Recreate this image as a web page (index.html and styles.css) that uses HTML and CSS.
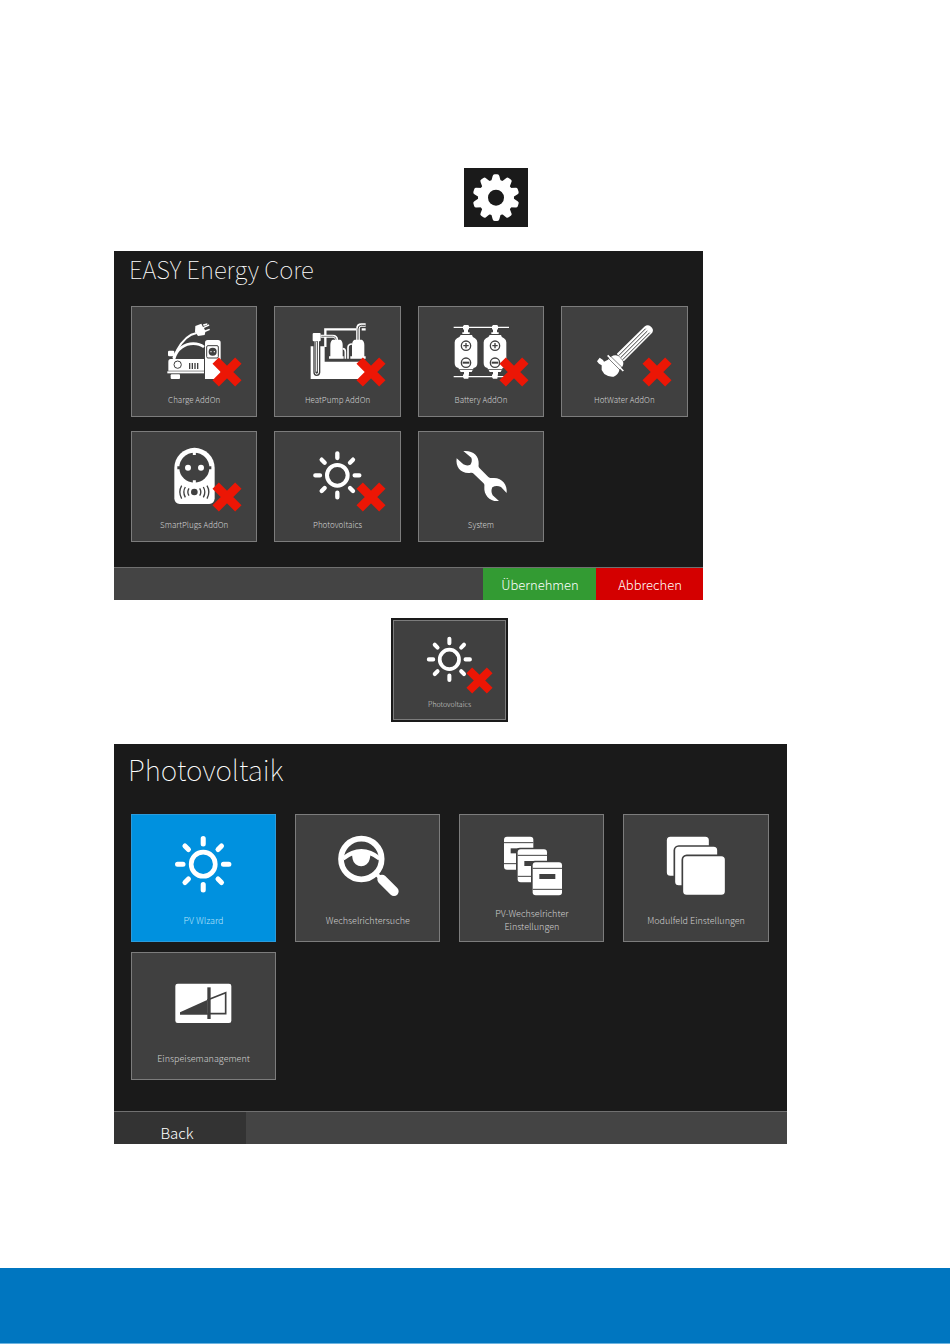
FILE: index.html
```html
<!DOCTYPE html>
<html lang="de">
<head>
<meta charset="utf-8">
<meta name="viewport" content="width=device-width, initial-scale=1">
<title>EASY Energy Core</title>
<link rel="stylesheet" href="styles.css">
</head>
<body>
<svg class="defs" aria-hidden="true">
  <symbol id="sun" viewBox="0 0 180 180">
    <g fill="none" stroke="currentColor" stroke-width="13" stroke-linecap="round">
      <circle cx="88" cy="88" r="31" stroke-width="12"/>
      <path d="M88 22V36M88 140V154M22 88H36M140 88H154M41 41L50 50M135 41L126 50M41 135L50 126M135 135L126 126"/>
    </g>
  </symbol>
  <symbol id="cross" viewBox="0 0 90 90">
    <path d="M11 11L79 79M79 11L11 79" fill="none" stroke="#ec1605" stroke-width="27"/>
  </symbol>
</svg>

<main class="page">
  <button class="gear" type="button" aria-label="Einstellungen">
    <svg viewBox="237 24 192 177" aria-hidden="true">
      <g fill="#fff">
        <circle cx="333" cy="113" r="54"/>
        <path id="tooth" d="M318 66L323 48Q324 43 329 43H337Q342 43 343 48L348 66Z"/>
        <use href="#tooth" transform="rotate(36 333 113)"/>
        <use href="#tooth" transform="rotate(72 333 113)"/>
        <use href="#tooth" transform="rotate(108 333 113)"/>
        <use href="#tooth" transform="rotate(144 333 113)"/>
        <use href="#tooth" transform="rotate(180 333 113)"/>
        <use href="#tooth" transform="rotate(216 333 113)"/>
        <use href="#tooth" transform="rotate(252 333 113)"/>
        <use href="#tooth" transform="rotate(288 333 113)"/>
        <use href="#tooth" transform="rotate(324 333 113)"/>
      </g>
      <circle cx="333" cy="113" r="24" fill="#1a1a1a"/>
    </svg>
  </button>

  <section class="panel panel-core">
    <h1 class="title">EASY Energy Core</h1>
    <div class="grid">
      <button class="tile" type="button">
        <svg class="icon" viewBox="164 228 180 180" aria-hidden="true">
          <g fill="#fff">
            <path d="M258 243L276 236L281 246L299 238L300 242L284 249L287 256L300 251L302 255L288 261L286 270L266 273L257 260Z"/>
            <path d="M281 238L294 235V239L283 243Z"/>
            <path d="M262 264C238 268 220 284 203 316C199 325 195 330 192 340" fill="none" stroke="#fff" stroke-width="6"/>
            <rect x="176" y="317" width="19" height="17" rx="4"/>
            <path d="M194 342C202 310 228 296 252 296C266 296 276 300 284 306" fill="none" stroke="#fff" stroke-width="8"/>
            <path d="M184 342H284V377H177V350Q177 342 184 342Z"/>
            <rect x="174" y="379" width="110" height="6"/>
            <rect x="184" y="388" width="28" height="14" rx="3"/>
            <path d="M295 285H326Q334 285 334 293V402H287V293Q287 285 295 285Z"/>
          </g>
          <circle cx="205" cy="359" r="11" fill="none" stroke="#404040" stroke-width="3"/>
          <path d="M241 354V372M249 354V372M257 354V372M265 354V372" stroke="#404040" stroke-width="4"/>
          <rect x="292" y="302" width="35" height="37" rx="4" fill="none" stroke="#404040" stroke-width="3"/>
          <circle cx="310" cy="320" r="12" fill="#404040"/>
          <circle cx="305" cy="320" r="2" fill="#fff"/><circle cx="315" cy="320" r="2" fill="#fff"/>
        </svg>
        <svg class="cross" aria-hidden="true"><use href="#cross"/></svg>
        <span class="label">Charge AddOn</span>
      </button>

      <button class="tile" type="button">
        <svg class="icon" viewBox="594 228 180 180" aria-hidden="true">
          <path d="M602 304H644V350H767V402H602Z" fill="#fff"/>
          <path d="M646 306V253H738M755 253H767" fill="none" stroke="#fff" stroke-width="7"/>
          <path d="M744 290V250Q744 240 754 240H767" fill="none" stroke="#fff" stroke-width="11"/>
          <path d="M744 290V252Q744 241 754 241H767" fill="none" stroke="#404040" stroke-width="3"/>
          <path d="M612 274V382Q612 391 620 391T629 382V274Z" fill="#fff" stroke="#404040" stroke-width="4"/>
          <path d="M620 288V382" stroke="#404040" stroke-width="8" stroke-linecap="round"/>
          <path d="M620 290V380" stroke="#fff" stroke-width="3"/>
          <rect x="608" y="264" width="24" height="25" rx="3" fill="#fff"/>
          <path d="M632 274H668Q680 274 680 286" fill="none" stroke="#fff" stroke-width="9"/>
          <path d="M634 274H668Q679 274 679 286" fill="none" stroke="#404040" stroke-width="2"/>
          <path d="M668 284H691Q698 288 698 300V334H701V341H657V334H661V300Q661 288 668 284ZM734 284H755Q763 288 763 300V334H767V341H721V334H726V300Q726 288 734 284Z" fill="#fff"/>
          <path d="M698 311Q706 311 706 320V341M714 341V308Q714 297 726 297" fill="none" stroke="#fff" stroke-width="5"/>
          <path d="M649 306V345H767" fill="none" stroke="#404040" stroke-width="4"/>
        </svg>
        <svg class="cross" aria-hidden="true"><use href="#cross"/></svg>
        <span class="label">HeatPump AddOn</span>
      </button>

      <button class="tile" type="button">
        <svg class="icon" viewBox="124 228 180 180" aria-hidden="true">
          <path d="M132 247H298M132 395H290" stroke="#fff" stroke-width="4"/>
          <g id="cell">
            <path d="M163 240H176L178 244V252L175 255V262H180V267H158V262H163V255L160 252V244ZM153 270H187Q188 278 196 280Q203 284 203 292V354Q203 367 191 369V373H147V369Q135 367 135 354V292Q135 284 142 280Q150 278 153 270ZM150 375H189L186 381H178V386L176 401H163L160 396V390L163 386V381H153Z" fill="#fff"/>
            <circle cx="169" cy="302" r="14" fill="none" stroke="#404040" stroke-width="4"/>
            <path d="M169 294V310M161 302H177" stroke="#404040" stroke-width="4"/>
            <circle cx="169" cy="353" r="14" fill="none" stroke="#404040" stroke-width="4"/>
            <path d="M159 353H179" stroke="#404040" stroke-width="6"/>
          </g>
          <use href="#cell" x="87"/>
        </svg>
        <svg class="cross" aria-hidden="true"><use href="#cross"/></svg>
        <span class="label">Battery AddOn</span>
      </button>

      <button class="tile" type="button">
        <svg class="icon" viewBox="553 228 180 180" aria-hidden="true">
          <path d="M623 328L706 246Q714 240 722 246Q731 254 726 262L641 347" fill="#fff" stroke="#fff" stroke-width="4"/>
          <path d="M627 332L708 251M633 338L713 258M639 344L720 263" stroke="#404040" stroke-width="3" fill="none"/>
          <path d="M604 335Q622 324 634 341Q645 350 639 364L630 372Q626 390 612 395Q598 397 584 387L576 375L576 361L568 356L562 349L570 338L580 345L583 350L595 344Z" fill="#fff"/>
          <path d="M594 331L641 378" stroke="#fff" stroke-width="5"/>
          <path d="M600 331L642 372" stroke="#404040" stroke-width="2"/>
          <path d="M594 338L634 378" stroke="#404040" stroke-width="2"/>
        </svg>
        <svg class="cross" aria-hidden="true"><use href="#cross"/></svg>
        <span class="label">HotWater AddOn</span>
      </button>

      <button class="tile" type="button">
        <svg class="icon" viewBox="164 63 180 180" aria-hidden="true">
          <path d="M195 129A60 60 0 0 1 316 129V221Q314 235 300 237H211Q197 235 195 221Z" fill="#fff"/>
          <circle cx="255" cy="128" r="45" fill="#404040"/>
          <path d="M204 128H212M298 128H306" stroke="#404040" stroke-width="9"/>
          <path d="M255 80V90M255 166V176" stroke="#fff" stroke-width="9"/>
          <circle cx="236" cy="128" r="9" fill="#fff"/><circle cx="275" cy="128" r="9" fill="#fff"/>
          <circle cx="255" cy="201" r="10" fill="#404040"/>
          <path d="M239 190Q232 201 239 212M228 186Q219 201 228 217M217 182Q206 201 217 221M271 190Q278 201 271 212M282 186Q291 201 282 217M293 182Q304 201 293 221" fill="none" stroke="#404040" stroke-width="4"/>
        </svg>
        <svg class="cross" aria-hidden="true"><use href="#cross"/></svg>
        <span class="label">SmartPlugs AddOn</span>
      </button>

      <button class="tile" type="button">
        <svg class="icon" aria-hidden="true"><use href="#sun"/></svg>
        <svg class="cross" aria-hidden="true"><use href="#cross"/></svg>
        <span class="label">Photovoltaics</span>
      </button>

      <button class="tile" type="button">
        <svg class="icon" viewBox="124 63 180 180" aria-hidden="true">
          <path d="M161 78C188 75 209 91 207 118C206 124 207 127 210 130L236 156C239 159 243 159 248 159C276 156 294 178 291 204L274 186Q260 180 248 187Q242 199 249 211L268 228C241 231 222 211 224 185C225 180 224 177 221 174L192 146C189 143 186 143 180 144C153 146 137 126 141 100L161 118Q172 124 182 119Q189 108 185 98Z" fill="#fff"/>
        </svg>
        <span class="label">System</span>
      </button>
    </div>
    <div class="bar">
      <button class="action action-apply" type="button">Übernehmen</button>
      <button class="action action-cancel" type="button">Abbrechen</button>
    </div>
  </section>

  <div class="preview">
    <button class="tile" type="button">
      <svg class="icon" aria-hidden="true"><use href="#sun"/></svg>
      <svg class="cross" aria-hidden="true"><use href="#cross"/></svg>
      <span class="label">Photovoltaics</span>
    </button>
  </div>

  <section class="panel panel-pv">
    <h2 class="title">Photovoltaik</h2>
    <div class="grid">
      <button class="tile tile-active" type="button">
        <svg class="icon icon-wide" aria-hidden="true"><use href="#sun"/></svg>
        <span class="label">PV WIzard</span>
      </button>

      <button class="tile" type="button">
        <svg class="icon" viewBox="683 285 180 180" aria-hidden="true">
          <circle cx="753" cy="357" r="61" fill="none" stroke="#fff" stroke-width="17"/>
          <path d="M698 356Q753 312 808 356" fill="none" stroke="#fff" stroke-width="13"/>
          <path d="M724 338Q753 322 782 338L778 358A26 26 0 0 1 727 358Z" fill="#fff"/>
          <path d="M797 401L808 412" stroke="#fff" stroke-width="12"/>
          <path d="M815 418L851 454" stroke="#fff" stroke-width="28" stroke-linecap="round"/>
        </svg>
        <span class="label">Wechselrichtersuche</span>
      </button>

      <button class="tile" type="button">
        <svg class="icon" viewBox="155 285 180 180" aria-hidden="true">
          <g id="inverter">
            <rect x="156" y="285" width="98" height="109" rx="12" fill="#404040"/>
            <rect x="161" y="290" width="88" height="99" rx="9" fill="#fff"/>
            <path d="M161 308H249M161 371H249" stroke="#404040" stroke-width="3"/>
            <rect x="181" y="325" width="48" height="15" fill="#404040"/>
          </g>
          <use href="#inverter" x="41" y="38"/>
          <use href="#inverter" x="86" y="77"/>
        </svg>
        <span class="label">PV-Wechselrichter<br>Einstellungen</span>
      </button>

      <button class="tile" type="button">
        <svg class="icon" viewBox="650 285 180 180" aria-hidden="true">
          <g fill="#fff" stroke="#404040" stroke-width="5">
            <rect x="650" y="288" width="131" height="122" rx="13"/>
            <rect x="675" y="318" width="131" height="120" rx="13"/>
            <rect x="699" y="346" width="130" height="121" rx="13"/>
          </g>
        </svg>
        <span class="label">Modulfeld Einstellungen</span>
      </button>

      <button class="tile" type="button">
        <svg class="icon" viewBox="190 84 180 180" aria-hidden="true">
          <rect x="194" y="116" width="168" height="118" rx="7" fill="#fff"/>
          <path d="M208 202L291 164V209H208Z" fill="#404040"/>
          <path d="M290 165L345 143V206H290" fill="none" stroke="#404040" stroke-width="5"/>
          <path d="M295 127V222" stroke="#404040" stroke-width="10"/>
        </svg>
        <span class="label">Einspeisemanagement</span>
      </button>
    </div>
    <div class="bar">
      <button class="action action-back" type="button">Back</button>
    </div>
  </section>
</main>
<footer class="footer"></footer>
</body>
</html>
```
FILE: styles.css
```css
* {
  box-sizing: border-box;
}

body {
  margin: 0;
  min-height: 100vh;
  display: flex;
  flex-direction: column;
  background: #fff;
  color: #fff;
  font-family: "Noto Sans CJK JP", "Noto Sans", sans-serif;
  font-weight: 300;
}

button {
  margin: 0;
  padding: 0;
  border: 0;
  color: inherit;
  font: inherit;
  cursor: pointer;
}

.defs {
  position: absolute;
  width: 0;
  height: 0;
}

.page {
  flex: 1;
  padding: 168px 17.2% 124px 12%;
}

.gear {
  display: block;
  width: 64px;
  height: 59px;
  margin-left: 52%;
  background: #1a1a1a;
}

.gear svg {
  display: block;
  width: 100%;
  height: 100%;
}

.panel {
  display: flex;
  flex-direction: column;
  background: #1a1a1a;
}

.panel-core {
  width: 87.5%;
  margin-top: 24px;
}

.panel-pv {
  margin-top: 22px;
}

.title {
  margin: 0;
  font-weight: 100;
  white-space: nowrap;
}

.panel-core .title {
  padding: 0 15px;
  height: 55px;
  font-size: 24px;
  line-height: 36px;
}

.panel-pv .title {
  padding: 0 14px;
  height: 70px;
  font-size: 28px;
  line-height: 50px;
}

.grid {
  display: grid;
  grid-template-columns: repeat(4, 1fr);
}

.panel-core .grid {
  gap: 14px 17px;
  padding: 0 15px 25px 17px;
}

.panel-pv .grid {
  gap: 10px 19px;
  padding: 0 18px 31px 17px;
}

.tile {
  position: relative;
  display: flex;
  flex-direction: column;
  align-items: center;
  min-width: 0;
  min-height: 111px;
  padding-top: 14px;
  border: 1px solid #7c7c7c;
  background: #404040;
  color: #fff;
}

.panel-pv .tile {
  min-height: 128px;
  padding-top: 20px;
}

.panel-pv .tile-active {
  border-color: #2b9bdb;
  background: #0091df;
}

.icon {
  flex: none;
  width: 60px;
  height: 60px;
  overflow: visible;
}

.icon-wide {
  width: 70px;
  height: 70px;
  margin: -5px 0;
}

.cross {
  position: absolute;
  top: 50px;
  left: calc(50% + 18px);
  width: 30px;
  height: 30px;
}

.label {
  flex: 1;
  display: flex;
  align-items: center;
  padding-top: 2px;
  color: #d2d2d2;
  font-size: 8px;
  line-height: 13px;
  text-align: center;
}

.panel-pv .label {
  padding-top: 4px;
  font-size: 9px;
}

.panel-pv .tile-active .label {
  color: #b9e2fa;
}

.bar {
  display: flex;
  justify-content: flex-end;
  height: 33px;
  border-top: 1px solid #707070;
  background: #444;
  overflow: hidden;
}

.action {
  font-size: 13px;
  line-height: 22px;
  padding: 2px 0 0 2px;
}

.action-apply {
  width: 113px;
  background: #339b33;
}

.action-cancel {
  width: 107px;
  background: #d40000;
}

.action-back {
  width: 132px;
  margin-right: auto;
  padding: 10px 6px 0 0;
  background: #333;
  font-size: 15px;
}

.preview {
  width: 117px;
  margin: 18px 0 0 41.2%;
  padding: 2px;
  background: #1a1a1a;
}

.preview .tile {
  width: 100%;
  min-height: 100px;
  padding-top: 11px;
}

.preview .icon {
  width: 56px;
  height: 56px;
}

.preview .label {
  font-size: 7px;
}

.preview .cross {
  top: 46px;
  left: calc(50% + 16px);
  width: 27px;
  height: 27px;
}

.footer {
  height: 76px;
  border-bottom: 1px solid #6db4e0;
  background: #0076c0;
}
```
